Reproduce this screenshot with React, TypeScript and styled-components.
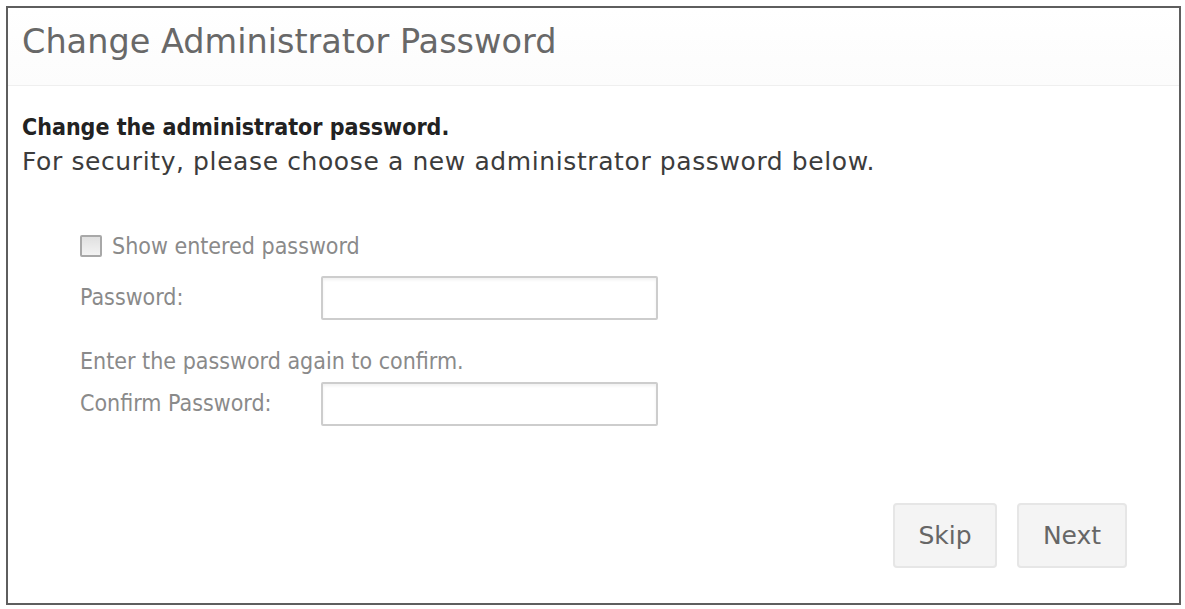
import React from "react";
import styled, { createGlobalStyle } from "styled-components";

const Global = createGlobalStyle`
  html, body { margin: 0; padding: 0; background: #ffffff; }
  * { box-sizing: border-box; }
`;

const Panel = styled.div`
  margin: 6px;
  width: 1175px;
  height: 599px;
  border: 2px solid #5e5e5e;
  background: #ffffff;
  display: flex;
  flex-direction: column;
  font-family: "DejaVu Sans", Verdana, sans-serif;
`;

const Header = styled.div`
  height: 78px;
  padding: 14px 14px 0;
  border-bottom: 1px solid #efefef;
  background: linear-gradient(#ffffff, #fcfcfc);
`;

const Title = styled.h1`
  margin: 0;
  font-size: 33.5px;
  line-height: 40px;
  font-weight: normal;
  color: #686868;
`;

const Body = styled.div`
  flex: 1;
  display: flex;
  flex-direction: column;
  padding: 24px 14px 0;
`;

const Heading = styled.h2`
  margin: 0;
  font-family: "DejaVu Sans Condensed", "DejaVu Sans", sans-serif;
  font-stretch: condensed;
  font-size: 23px;
  line-height: 34px;
  font-weight: bold;
  color: #222222;
`;

const Lead = styled.p`
  margin: 0;
  font-size: 25px;
  line-height: 36px;
  color: #3c3c3c;
  letter-spacing: 0.6px;
`;

const Form = styled.div`
  display: flex;
  flex-direction: column;
  padding: 54px 0 0 58px;
  font-family: "DejaVu Sans Condensed", "DejaVu Sans", sans-serif;
  font-stretch: condensed;
  color: #8a8a8a;
  font-size: 23px;
`;

const CheckRow = styled.label`
  display: flex;
  align-items: center;
  gap: 10px;
  height: 24px;
  line-height: 24px;
`;

const Box = styled.span`
  width: 22px;
  height: 22px;
  border: 2px solid #a8a8a8;
  border-radius: 2px;
  background: linear-gradient(#e0e0e0, #f3f3f3);
`;

const FieldRow = styled.div<{ $top: number }>`
  display: flex;
  align-items: center;
  margin-top: ${(p) => p.$top}px;
`;

const Label = styled.span`
  width: 241px;
  line-height: 24px;
  padding-bottom: 2px;
`;

const Input = styled.div`
  width: 337px;
  height: 44px;
  border: 2px solid #cdcdcd;
  border-radius: 2px;
  background: #ffffff;
  box-shadow: inset 0 2px 3px rgba(0, 0, 0, 0.06);
`;

const Hint = styled.div`
  margin-top: 29px;
  line-height: 24px;
`;

const Footer = styled.div`
  margin-top: auto;
  display: flex;
  justify-content: flex-end;
  gap: 20px;
  padding: 0 38px 35px 0;
`;

const Button = styled.button<{ $w: number }>`
  width: ${(p) => p.$w}px;
  height: 65px;
  border: 2px solid #e6e6e6;
  border-radius: 4px;
  background: #f4f4f4;
  color: #666666;
  font-family: "DejaVu Sans", Verdana, sans-serif;
  font-size: 25px;
  padding: 0;
`;

export default function App() {
  return (
    <>
      <Global />
      <Panel>
        <Header>
          <Title>Change Administrator Password</Title>
        </Header>
        <Body>
          <Heading>Change the administrator password.</Heading>
          <Lead>For security, please choose a new administrator password below.</Lead>
          <Form>
            <CheckRow>
              <Box />
              <span>Show entered password</span>
            </CheckRow>
            <FieldRow $top={18}>
              <Label>Password:</Label>
              <Input />
            </FieldRow>
            <Hint>Enter the password again to confirm.</Hint>
            <FieldRow $top={9}>
              <Label>Confirm Password:</Label>
              <Input />
            </FieldRow>
          </Form>
          <Footer>
            <Button $w={104}>Skip</Button>
            <Button $w={110}>Next</Button>
          </Footer>
        </Body>
      </Panel>
    </>
  );
}
